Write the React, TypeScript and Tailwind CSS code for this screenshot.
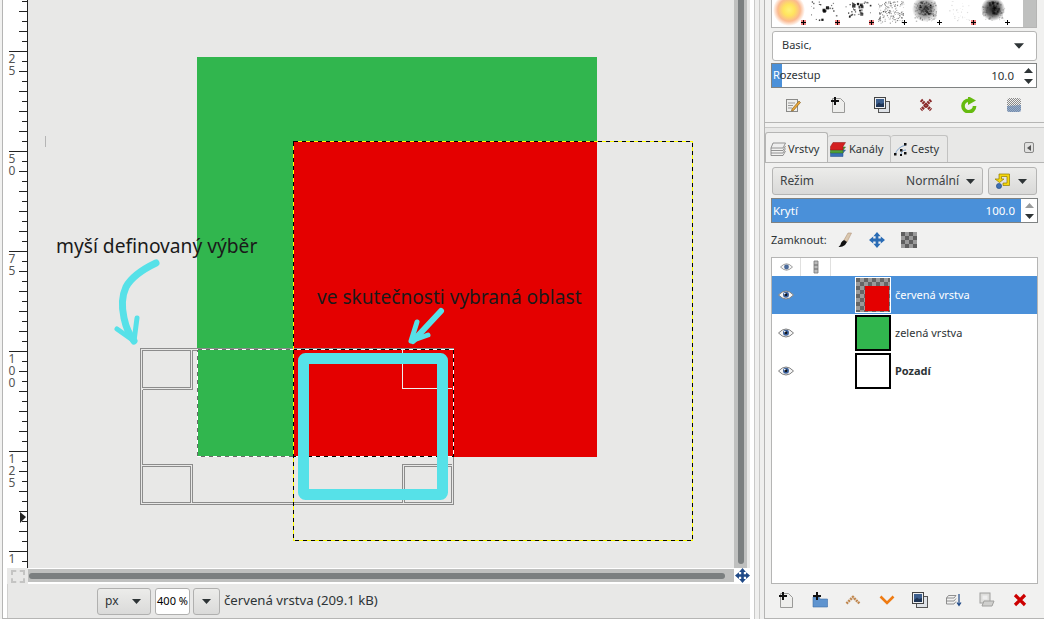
const font = { fontFamily: '"Noto Sans", "Open Sans", sans-serif' };

function Caret({ className = 'w-[11px] h-[6px]' }: { className?: string }) {
  return (
    <svg viewBox="0 0 11 6" className={className}>
      <polygon points="0,0 11,0 5.5,6" fill="#2e3436" />
    </svg>
  );
}

function Move({ size = 16, color = '#204a87' }: { size?: number; color?: string }) {
  return (
    <svg viewBox="0 0 16 16" width={size} height={size}>
      <path d="M8 0 L11.6 4.2 L9.4 4.2 L9.4 6.6 L11.8 6.6 L11.8 4.4 L16 8 L11.8 11.6 L11.8 9.4 L9.4 9.4 L9.4 11.8 L11.6 11.8 L8 16 L4.4 11.8 L6.6 11.8 L6.6 9.4 L4.2 9.4 L4.2 11.6 L0 8 L4.2 4.4 L4.2 6.6 L6.6 6.6 L6.6 4.2 L4.4 4.2 Z" fill={color} />
    </svg>
  );
}

function Eye() {
  return (
    <svg viewBox="0 0 16 10" width="16" height="10">
      <path d="M0.5 5 Q8 -3 15.5 5 Q8 13 0.5 5 Z" fill="#f4f4f4" stroke="#808080" strokeWidth="1" />
      <circle cx="8" cy="4.8" r="3" fill="#3a5f9a" />
      <circle cx="8" cy="4.8" r="1.3" fill="#111" />
      <circle cx="6.8" cy="3.6" r="0.8" fill="#fff" />
    </svg>
  );
}

function NewPage({ folder = false }: { folder?: boolean }) {
  return (
    <svg viewBox="0 0 16 16" width="16" height="16">
      {folder ? (
        <path d="M1 5 L7 5 L8 7 L15.5 7 L15.5 15 L1 15 Z" fill="#5f94cf" stroke="#3f6ea8" strokeWidth="0.6" />
      ) : (
        <path d="M2.5 1.5 L10.5 1.5 L14.5 5.5 L14.5 15.5 L2.5 15.5 Z" fill="#eeeeec" stroke="#9a9a98" />
      )}
      <path d="M4 0 L6 0 L6 3 L9 3 L9 5 L6 5 L6 8 L4 8 L4 5 L1 5 L1 3 L4 3 Z" fill="#111" />
    </svg>
  );
}

function Duplicate() {
  return (
    <svg viewBox="0 0 16 16" width="16" height="16">
      <rect x="4.5" y="4.5" width="11" height="11" fill="#dfe3e8" stroke="#555" />
      <rect x="0.5" y="0.5" width="11" height="11" fill="#eef0f2" stroke="#444" />
      <rect x="2" y="2" width="8" height="8" fill="#3d5f8e" />
      <path d="M2 8 L5 5.5 L7 7 L10 6 L10 10 L2 10 Z" fill="#1f3556" />
    </svg>
  );
}

function Cross({ hatch = false }: { hatch?: boolean }) {
  return (
    <svg viewBox="0 0 14 14" width="14" height="14">
      <path d="M2 2 L12 12 M12 2 L2 12" stroke={hatch ? '#8a2a2a' : '#cc0000'} strokeWidth="3.2" strokeDasharray={hatch ? '2 0.6' : undefined} />
    </svg>
  );
}

function Chevron({ up, hatch }: { up?: boolean; hatch?: boolean }) {
  return (
    <svg viewBox="0 0 16 10" width="16" height="10">
      <path d={up ? 'M1.5 8.5 L8 2 L14.5 8.5' : 'M1.5 1.5 L8 8 L14.5 1.5'} fill="none" stroke={hatch ? '#c08850' : '#ef7b12'} strokeWidth="2.6" strokeDasharray={hatch ? '2 0.7' : undefined} />
    </svg>
  );
}

function BrushGrid() {
  // deterministic speckle for the brush thumbnails
  let seed = 11;
  const rnd = () => {
    seed = (seed * 16807) % 2147483647;
    return (seed % 1000) / 1000;
  };
  const specks: { x: number; y: number; s: number; o: number }[] = [];
  const add = (cx: number, w: number, n: number, s: number, o: number, h = 20) => {
    for (let i = 0; i < n; i++) {
      specks.push({ x: cx + (rnd() - 0.5) * w, y: rnd() * h + 1, s: s * (0.6 + rnd()), o: o * (0.5 + rnd() / 2) });
    }
  };
  add(51, 26, 20, 1, 0.9);
  add(51, 8, 5, 2, 0.9);
  add(85, 26, 28, 1.1, 0.9, 16);
  add(85, 10, 10, 2.2, 1, 14);
  add(119, 26, 170, 0.8, 0.6, 22);
  add(153, 22, 130, 1, 0.3, 20);
  add(153, 12, 70, 1.2, 0.5, 14);
  add(187, 20, 28, 0.8, 0.22);
  add(221, 22, 70, 1.2, 0.25, 19);
  add(221, 10, 30, 1.6, 0.55, 12);
  const plus = [31, 65, 99, 132, 167, 201, 235];
  const red = [0, 1, 2, 5];
  return (
    <svg viewBox="0 0 251 27" width="251" height="27" className="block">
      <defs>
        <radialGradient id="glow" cx="0.5" cy="0.5" r="0.5">
          <stop offset="0" stopColor="#fff27a" />
          <stop offset="0.35" stopColor="#ffe45e" />
          <stop offset="0.7" stopColor="#fbb98f" />
          <stop offset="1" stopColor="#ffffff" />
        </radialGradient>
        <radialGradient id="cloud" cx="0.5" cy="0.5" r="0.5">
          <stop offset="0" stopColor="#555" />
          <stop offset="0.6" stopColor="#aaa" />
          <stop offset="1" stopColor="#ffffff" />
        </radialGradient>
        <radialGradient id="blob" cx="0.5" cy="0.5" r="0.5">
          <stop offset="0" stopColor="#222" />
          <stop offset="0.55" stopColor="#666" />
          <stop offset="1" stopColor="#ffffff" />
        </radialGradient>
      </defs>
      <circle cx="17" cy="10" r="16" fill="url(#glow)" />
      <circle cx="153" cy="9" r="13" fill="url(#cloud)" />
      <circle cx="221" cy="9" r="12" fill="url(#blob)" />
      {specks.map((d, i) => (
        <rect key={i} x={d.x} y={d.y} width={d.s} height={d.s} fill="#000" opacity={d.o} />
      ))}
      {plus.map((x, i) => (
        <g key={x} shapeRendering="crispEdges">
          {red.includes(i) && <rect x={x - 2} y={20} width={5} height={5} fill="#f08080" />}
          <path d={`M${x - 2} 22.5 H${x + 3} M${x + 0.5} 20 V25`} stroke="#000" strokeWidth="1" />
        </g>
      ))}
    </svg>
  );
}

function Ruler() {
  const ticks: number[] = [];
  for (let y = 1; y < 570; y += 10) ticks.push(y);
  const labels: [number, string][] = [
    [51, '25'],
    [151, '50'],
    [251, '75'],
    [351, '100'],
    [451, '125'],
    [551, '1'],
  ];
  return (
    <svg viewBox="3 0 25 568" width="25" height="568" className="block shrink-0 bg-white">
      <g shapeRendering="crispEdges" stroke="#222">
        <path d="M27.5 0 V568" />
        {ticks.map((y) => {
          const major = (y - 51) % 100 === 0;
          const long = (y - 51) % 20 === 0;
          return <path key={y} d={`M${major ? 9 : long ? 19 : 22} ${y + 0.5} H27`} />;
        })}
      </g>
      {labels.map(([y, text]) =>
        text.split('').map((c, i) => (
          <text key={i} x="12" y={y + 12 + i * 12} textAnchor="middle" fontSize="12" fill="#555" style={font}>
            {c}
          </text>
        )),
      )}
      <polygon points="20,512 26,517 20,523" fill="#222" />
    </svg>
  );
}

function Canvas() {
  const cyan = '#56e1e8';
  const gray = '#8c8c8c';
  return (
    <div className="relative h-[568px] w-[706px] shrink-0 overflow-hidden bg-[#e8e8e7]">
      <svg viewBox="28 0 706 568" width="706" height="568" className="absolute left-0 top-0">
        <rect x="45" y="136" width="1" height="11" fill="#b5b5b5" />
        <rect x="197" y="57" width="400" height="400" fill="#31b64e" />
        <rect x="293" y="141" width="304" height="316" fill="#e40000" />
        <g shapeRendering="crispEdges" fill="none" strokeWidth="1">
          <path d="M140.5 348.5 H453.5 V504.5 H140.5 Z" stroke={gray} />
          <path d="M142.5 389.5 V464.5" stroke={gray} />
          <path d="M142.5 350.5 H190.5 V387.5 H142.5 Z" stroke={gray} />
          <path d="M142.5 466.5 H190.5 V502.5 H142.5 Z" stroke={gray} />
          <path d="M142.5 389.5 H192.5 V350.5 H197 M142.5 464.5 H192.5 V502.5 H402.5 V464.5 H451.5 M404.5 466.5 H451.5 V502.5 H404.5 Z" stroke={gray} />
          <path d="M402.5 350 V388.5 H452" stroke="#eeeeee" />
          {/* selection ants */}
          <path d="M197.5 349.5 H453 V456.5 H197.5 Z" stroke="#ffffff" />
          <path d="M197.5 349.5 H293" stroke="#6a6a6a" strokeDasharray="4 4" />
          <path d="M293 349.5 H453 V456.5 H293" stroke="#000" strokeDasharray="4 4" />
          <path d="M293 456.5 H197.5 V349.5" stroke="#6a6a6a" strokeDasharray="4 4" />
        </g>
        <rect x="303.5" y="358.5" width="139" height="136" rx="2" fill="none" stroke={cyan} strokeWidth="11" />
        <g shapeRendering="crispEdges" fill="none">
          <path d="M293.5 141.5 H692.5 V540.5 H293.5 Z" stroke="#ffff00" />
          <path d="M293.5 141.5 H692.5 V540.5 H293.5 Z" stroke="#000" strokeDasharray="4 4" />
        </g>
        <g fill="none" stroke={cyan} strokeLinecap="round" strokeLinejoin="round">
          <path d="M156 263 Q133 274 126 287 Q120 300 124 318 Q127 332 134 341" strokeWidth="7" />
          <path d="M117 329 L134 341 L137 318" strokeWidth="5" />
          <path d="M441 311 L413 341" strokeWidth="6" />
          <path d="M417 322 L411 341 L428 335" strokeWidth="5" />
        </g>
      </svg>
      <span className="absolute left-[28px] top-[233px] text-[19.2px] leading-[26px] whitespace-nowrap text-[#1a1a1a]" style={font}>
        myší definovaný výběr
      </span>
      <span className="absolute left-[289px] top-[284px] text-[19.1px] leading-[26px] whitespace-nowrap text-[#1a1a1a]" style={font}>
        ve skutečnosti vybraná oblast
      </span>
    </div>
  );
}

function LeftWindow() {
  return (
    <div className="ml-[2px] flex h-full w-[748px] shrink-0 flex-col border-b border-l border-[#b5b5b4] bg-[#e8e8e7]">
      <div className="flex h-[568px] shrink-0">
        <Ruler />
        <Canvas />
        <div className="flex h-full w-[13px] shrink-0 bg-[#bfc0bf] pb-[4px] pl-[4px]">
          <div className="h-full w-[6px] rounded-b-[3px] bg-[#7b7f80]" />
        </div>
      </div>
      <div className="flex h-[16px] shrink-0 bg-white">
        <div className="w-[4px] shrink-0 bg-white" />
        <div className="flex h-[16px] w-[21px] shrink-0 items-center justify-center bg-[#e8e8e7]">
          <div className="h-[13px] w-[14px] border-2 border-dashed border-[#c4c4c3]" />
        </div>
        <div className="mt-[1px] flex h-[13px] w-[706px] shrink-0 items-center bg-[#bfc0bf] pl-[1px] pr-[9px]">
          <div className="h-[6px] w-full rounded-[3px] bg-[#7b7f80]" />
        </div>
        <div className="flex w-[16px] shrink-0 items-start justify-center bg-white">
          <Move size={15} />
        </div>
      </div>
      <div className="flex flex-1 bg-white">
        <div className="w-[4px] shrink-0 bg-white" />
        <div className="flex flex-1 items-center border-l border-[#d0d0cf] bg-[#e8e8e7] pl-[89px] text-[13.2px] text-[#2e3436]" style={font}>
          <div className="flex h-[27px] w-[54px] items-center justify-between rounded-[3px] border border-[#b0b0af] bg-linear-to-b from-[#ececea] to-[#dadad9] pl-[7px] pr-[9px] text-[12px]">
            px
            <Caret className="h-[5px] w-[9px]" />
          </div>
          <div className="ml-[4px] flex h-[27px] w-[35px] items-center justify-center rounded-[3px] border border-[#b0b0af] bg-white text-[11px] text-black">
            400 %
          </div>
          <div className="ml-[3px] flex h-[27px] w-[27px] items-center justify-center rounded-[3px] border border-[#b0b0af] bg-linear-to-b from-[#ececea] to-[#dadad9]">
            <Caret className="h-[5px] w-[9px]" />
          </div>
          <span className="ml-[4px] whitespace-nowrap">červená vrstva (209.1 kB)</span>
        </div>
      </div>
    </div>
  );
}

function PaneGap() {
  return (
    <div className="flex h-full w-[14px] shrink-0 bg-[#efefee]">
      <div className="w-[4px] bg-white" />
      <div className="w-px bg-[#c9c9c8]" />
      <div className="w-[4px]" />
      <div className="w-px bg-[#c9c9c8]" />
    </div>
  );
}

function Thumb({ kind }: { kind: 'red' | 'green' | 'white' }) {
  if (kind === 'red') {
    return (
      <svg viewBox="0 0 36 36" width="36" height="36" className="block" shapeRendering="crispEdges">
        <rect width="36" height="36" fill="#fff" />
        <defs>
          <pattern id="chk" width="8" height="8" patternUnits="userSpaceOnUse" x="1" y="1">
            <rect width="8" height="8" fill="#9a9a9a" />
            <rect width="4" height="4" fill="#666" />
            <rect x="4" y="4" width="4" height="4" fill="#666" />
          </pattern>
        </defs>
        <rect x="1" y="1" width="34" height="34" fill="url(#chk)" />
        <rect x="10" y="9" width="24" height="25" fill="#e40000" />
      </svg>
    );
  }
  return <div className={`h-[36px] w-[36px] border-2 border-black ${kind === 'green' ? 'bg-[#31b64e]' : 'bg-white'}`} />;
}

function LayerRow({ kind, name, active, bold }: { kind: 'red' | 'green' | 'white'; name: string; active?: boolean; bold?: boolean }) {
  return (
    <div className={`flex h-[38px] shrink-0 items-center ${active ? 'bg-[#4a90d9] text-white' : 'text-[#2e3436]'}`}>
      <div className="flex w-[28px] justify-center"><Eye /></div>
      <div className="w-[55px]" />
      <Thumb kind={kind} />
      <span className={`ml-[4px] text-[11px] ${bold ? 'font-bold' : ''}`}>{name}</span>
    </div>
  );
}

function SpinArrows({ light }: { light?: boolean }) {
  return (
    <div className="flex w-[16px] flex-col items-center justify-center gap-[6px] self-stretch bg-white">
      <svg viewBox="0 0 9 5" width="9" height="5"><polygon points="4.5,0 9,5 0,5" fill={light ? '#9a9c9c' : '#2e3436'} /></svg>
      <svg viewBox="0 0 9 5" width="9" height="5"><polygon points="0,0 9,0 4.5,5" fill="#2e3436" /></svg>
    </div>
  );
}

function RightPanel() {
  return (
    <div className="flex h-full w-[280px] shrink-0 flex-col border-l border-[#b5b5b4] bg-[#f1f1f0] text-[11px] text-[#2e3436]" style={font}>
      <div className="flex h-[123px] shrink-0 flex-col border-b border-[#b5b5b4] px-[6px]">
        <div className="flex h-[28px] w-[266px] shrink-0 border border-t-0 border-[#b5b5b4] bg-white">
          <BrushGrid />
          <div className="flex-1 bg-[#bfc0bf]" />
        </div>
        <div className="mx-px mt-[3px] flex h-[30px] items-center justify-between rounded-[3px] border border-[#b5b5b4] bg-white pl-[9px] pr-[12px]">
          <span className="-translate-y-px">Basic,</span>
          <Caret className="h-[6px] w-[10px]" />
        </div>
        <div className="mt-[2px] flex h-[25px] w-[266px] items-center border border-[#7f8282] bg-white">
          <div className="relative flex h-full flex-1 items-center pl-[1px]">
            <div className="absolute inset-y-0 left-0 w-[10px] bg-[#4a90d9]" />
            <span className="relative">
              <span className="text-white">R</span>ozestup
            </span>
            <span className="ml-auto mr-[6px] text-[11.5px]">10.0</span>
          </div>
          <SpinArrows />
        </div>
        <div className="flex flex-1 items-center justify-between pl-[14px] pr-[16px]">
          <svg viewBox="0 0 16 16" width="16" height="16">
            <rect x="1.5" y="2.5" width="11" height="12" fill="#eeeeec" stroke="#8a8a88" />
            <path d="M3 6 H10 M3 8.5 H8 M3 11 H7" stroke="#999" />
            <path d="M7 12 L14 4 L15.5 5.5 L8.5 13.5 L6.5 14 Z" fill="#e9a83a" stroke="#7a5210" strokeWidth="0.6" />
          </svg>
          <NewPage />
          <Duplicate />
          <Cross hatch />
          <svg viewBox="0 0 16 16" width="16" height="16">
            <path d="M13.6 9 A5.8 5.8 0 1 1 8 3.2" fill="none" stroke="#66bb10" strokeWidth="3.6" />
            <polygon points="7,-1 15,3.5 7,8" fill="#66bb10" />
          </svg>
          <svg viewBox="0 0 16 16" width="16" height="16">
            <defs>
              <pattern id="dth" width="2" height="2" patternUnits="userSpaceOnUse">
                <rect width="1" height="1" fill="#888" />
                <rect x="1" y="1" width="1" height="1" fill="#888" />
              </pattern>
            </defs>
            <rect x="1" y="1" width="14" height="14" rx="3" fill="url(#dth)" />
            <path d="M1 9 L15 8 L15 13 Q15 15 13 15 L3 15 Q1 15 1 13 Z" fill="#6f8fb8" opacity="0.7" />
          </svg>
        </div>
      </div>
      <div className="flex h-[5px] shrink-0 items-end"><div className="h-px w-full bg-[#c9c9c8]" /></div>
      <div className="flex h-[34px] shrink-0 items-end bg-[#e8e8e7]">
        <div className="flex h-[30px] w-[63px] items-center gap-[2px] rounded-t-[3px] border border-b-0 border-[#b5b5b4] bg-[#f1f1f0] pl-[4px] pt-[3px]">
          <svg viewBox="0 0 16 15" width="16" height="15">
            <path d="M3 1 H15.5 L13 6 H1 Z" fill="#eee" stroke="#888" strokeWidth="0.9" />
            <path d="M1 8.5 H13 L15.5 4 M1 11 H13 L15.5 6.5 M1 13.5 H13 L15.5 9 M1 6 V13.5" fill="none" stroke="#888" strokeWidth="0.9" />
          </svg>
          Vrstvy
        </div>
        <div className="flex h-[27px] w-[63px] items-center gap-[3px] rounded-t-[3px] border border-b-0 border-l-0 border-[#c2c2c1] bg-[#e8e8e7] pl-[2px] pt-[1px]">
          <svg viewBox="0 0 16 15" width="16" height="15">
            <path d="M0.5 11 L3 8 H15.5 L13 11 V14.5 H0.5 Z" fill="#3a6fb5" stroke="#204a87" strokeWidth="0.5" />
            <path d="M0.5 8 L3 5 H15.5 L13 8 V11 H0.5 Z" fill="#4ea13a" stroke="#2c6b1e" strokeWidth="0.5" />
            <path d="M0.5 4.5 L3 0.5 H15.5 L13 4.5 V8 H0.5 Z" fill="#d32020" stroke="#8a1010" strokeWidth="0.5" />
          </svg>
          Kanály
        </div>
        <div className="flex h-[27px] w-[57px] items-center gap-[1px] rounded-t-[3px] border border-b-0 border-l-0 border-[#c2c2c1] bg-[#e8e8e7] pl-[3px] pt-[1px]">
          <svg viewBox="0 0 16 14" width="16" height="14">
            <path d="M1 12 Q3 4 12 2" fill="none" stroke="#7fa3cc" />
            <path d="M7 12 Q7 7 12 7" fill="none" stroke="#7fa3cc" />
            <rect x="0" y="10" width="2.5" height="2.5" fill="#111" />
            <rect x="6" y="6" width="2.5" height="2.5" fill="#111" />
            <rect x="10" y="0" width="2.5" height="2.5" fill="#111" />
            <rect x="10" y="9" width="2.5" height="2.5" fill="#111" />
            <rect x="6" y="11" width="2" height="2" fill="#111" />
          </svg>
          Cesty
        </div>
        <div className="mb-[9px] ml-auto mr-[10px] flex h-[11px] w-[10px] items-center justify-center rounded-[2px] border border-[#8a8a89] bg-[#e0e0df]">
          <svg viewBox="0 0 4 6" width="4" height="6"><polygon points="4,0 4,6 0,3" fill="#555" /></svg>
        </div>
      </div>
      <div className="flex flex-1 flex-col border-b border-t border-[#b5b5b4] px-[6px] pt-[4px]">
        <div className="flex h-[28px] shrink-0 gap-[5px] px-px">
          <div className="flex flex-1 items-center justify-between rounded-[3px] border border-[#b5b5b4] bg-linear-to-b from-[#ececea] to-[#d9d9d8] px-[7px] text-[12px] text-[#3c4144]">
            Režim
            <span className="ml-auto mr-[7px]">Normální</span>
            <Caret className="h-[5px] w-[9px]" />
          </div>
          <div className="flex w-[49px] items-center justify-between rounded-[3px] border border-[#b5b5b4] bg-linear-to-b from-[#ececea] to-[#d9d9d8] pl-[5px] pr-[9px]">
            <svg viewBox="0 0 17 16" width="17" height="16">
              <path d="M5 1 H15.5 V12.5 H9 V10 H13 V3.5 H7.5 V6 H10 L5.5 9.5 L1 6 H5 Z" fill="#f5d60a" stroke="#8f7b00" strokeWidth="0.7" />
              <circle cx="5" cy="13" r="2.6" fill="#3f6fb0" stroke="#204a87" strokeWidth="0.6" />
            </svg>
            <Caret className="h-[5px] w-[9px]" />
          </div>
        </div>
        <div className="mt-[3px] flex h-[25px] shrink-0 items-center border border-[#7f8282] bg-[#4a90d9] text-white">
          <div className="flex flex-1 items-center pl-[1px] text-[11.5px]">
            Krytí
            <span className="ml-auto mr-[6px]">100.0</span>
          </div>
          <SpinArrows light />
        </div>
        <div className="flex h-[34px] shrink-0 items-center">
          Zamknout:
          <div className="ml-[10px] flex w-[80px] items-center justify-between">
            <svg viewBox="0 0 16 16" width="16" height="16">
              <path d="M14.5 1 L11 1 L7 8 L10 10 Z" fill="#d9c7ae" stroke="#a8876a" strokeWidth="0.5" />
              <path d="M7 8 L10 10 L8 13 Q5 15.5 1.5 15 Q4 13 4 11 Q5 9 7 8 Z" fill="#111" />
            </svg>
            <Move size={16} color="#2a6cb5" />
            <svg viewBox="0 0 16 16" width="16" height="16" shapeRendering="crispEdges">
              <rect width="16" height="16" fill="#9a9a9a" />
              <path d="M0 0H4V4H0Z M8 0H12V4H8Z M4 4H8V8H4Z M12 4H16V8H12Z M0 8H4V12H0Z M8 8H12V12H8Z M4 12H8V16H4Z M12 12H16V16H12Z" fill="#5f5f5f" />
            </svg>
          </div>
        </div>
        <div className="flex h-[327px] shrink-0 flex-col border border-[#b5b5b4] bg-white">
          <div className="flex h-[18px] shrink-0 text-[#888]">
            <div className="flex w-[29px] items-center justify-center border-r border-[#e0e0df]">
              <svg viewBox="0 0 16 10" width="13" height="8">
                <path d="M0.5 5 Q8 -3 15.5 5 Q8 13 0.5 5 Z" fill="#f4f4f4" stroke="#888" />
                <circle cx="8" cy="5" r="3" fill="#4a6a9a" />
              </svg>
            </div>
            <div className="flex w-[30px] items-center justify-center border-r border-[#e0e0df]">
              <svg viewBox="0 0 6 14" width="6" height="14">
                <path d="M1 1 H5 V5 H1 Z M1 5 H5 V9 H1 Z M1 9 H5 V13 H1 Z" fill="#bbb" stroke="#777" strokeWidth="0.8" />
              </svg>
            </div>
          </div>
          <LayerRow kind="red" name="červená vrstva" active />
          <LayerRow kind="green" name="zelená vrstva" />
          <LayerRow kind="white" name="Pozadí" bold />
        </div>
        <div className="flex flex-1 items-center justify-between pb-[2px] pl-[7px] pr-[11px]">
          <NewPage />
          <NewPage folder />
          <Chevron up hatch />
          <Chevron />
          <Duplicate />
          <svg viewBox="0 0 16 14" width="16" height="14">
            <path d="M0.5 5 H8 L10 2.5 H2.5 Z M0.5 8 H8 L10 5.5 M0.5 11 H8 L10 8.5 M0.5 5 V11" fill="none" stroke="#777" strokeWidth="0.8" />
            <path d="M13 1 V12 M11 9.5 L13 12.5 L15 9.5" fill="none" stroke="#204a87" strokeWidth="1.2" />
          </svg>
          <svg viewBox="0 0 16 16" width="16" height="16">
            <rect x="1" y="1" width="10" height="10" fill="#dddddb" stroke="#a0a09e" />
            <rect x="3.5" y="3.5" width="5" height="4" fill="#eee" />
            <path d="M3 14 L5 9 H15 L13 14 Z" fill="#cfcfcd" stroke="#a0a09e" />
          </svg>
          <Cross />
        </div>
      </div>
    </div>
  );
}

export default function App() {
  return (
    <div className="flex h-[619px] w-[1044px] overflow-hidden bg-[#f1f1f0]">
      <LeftWindow />
      <PaneGap />
      <RightPanel />
    </div>
  );
}
